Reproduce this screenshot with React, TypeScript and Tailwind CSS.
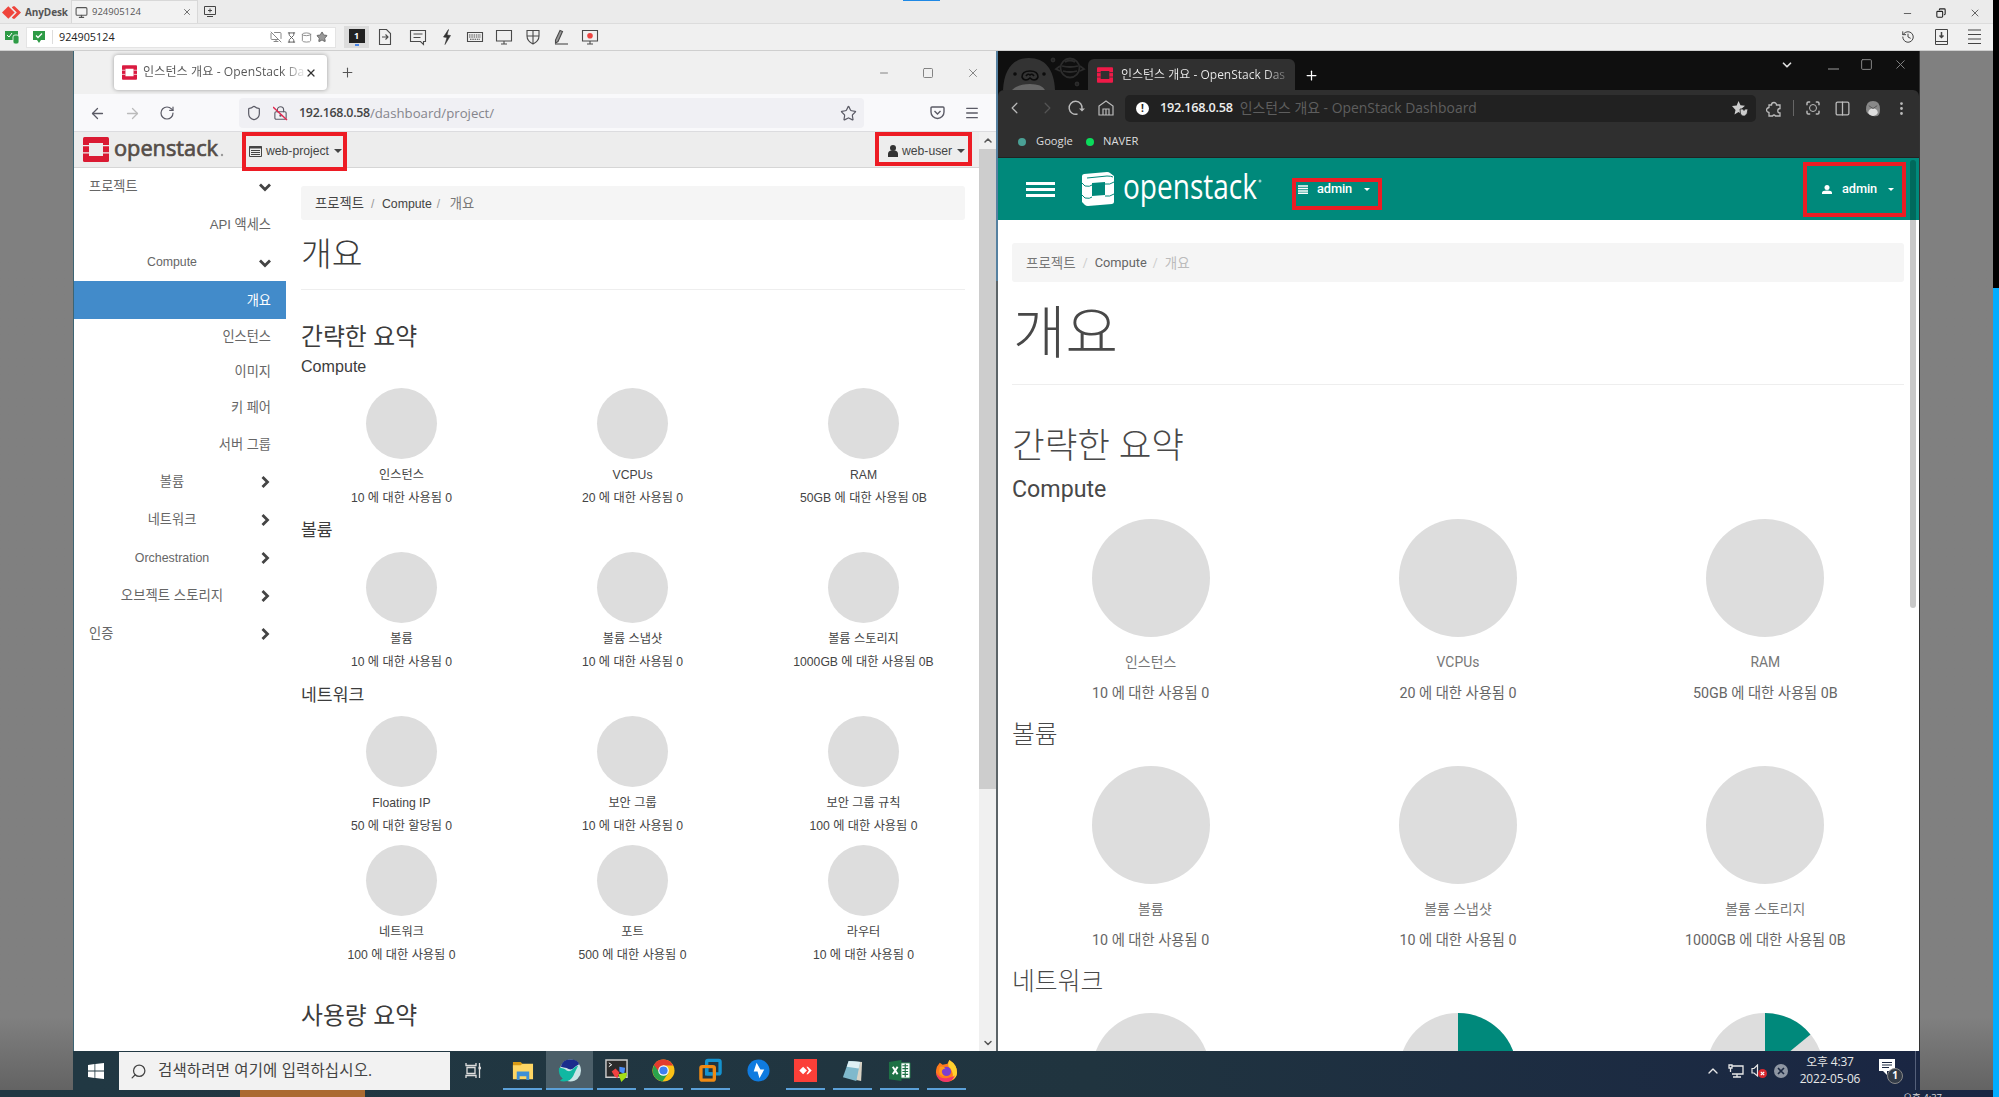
import React from "react";
import type { ReactNode } from "react";
import {
  ArrowLeft, ArrowRight, RotateCw, Shield, LockKeyhole, Star, Menu, Plus, X, Minus, Square, Copy, ChevronLeft, ChevronRight,
  ChevronDown, ChevronUp, Columns2, EllipsisVertical, History, MonitorOff, Hourglass, Cylinder,
  Monitor, Search, Scan,
} from "lucide-react";

const ARIAL = "font-['Liberation_Sans','Noto_Sans_CJK_KR',sans-serif]";
const ROBOTO = "font-['Roboto','Noto_Sans_CJK_KR',sans-serif]";
const UI = "font-['Open_Sans','Noto_Sans_CJK_KR',sans-serif]";

function Caret({ className }: { className: string }) {
  return (
    <svg className={className} viewBox="0 0 10 5">
      <path d="M0 0h10L5 5z" fill="currentColor" />
    </svg>
  );
}

function Chevron({ down }: { down?: boolean }) {
  return (
    <svg className="h-[12px] w-[12px] text-[#444]" viewBox="0 0 12 12" fill="none" stroke="currentColor" strokeWidth="2.8">
      {down ? <path d="M1 3.5l5 5 5-5" /> : <path d="M3.5 1l5 5-5 5" />}
    </svg>
  );
}

function OpenStackMark({ className, color, hole }: { className: string; color: string; hole: string }) {
  return (
    <svg className={className} viewBox="0 0 26 25">
      <rect width="26" height="25" rx="1.5" fill={color} />
      <rect x="6" y="6" width="14" height="13" fill={hole} />
      <path d="M0 8.6h6M20 8.6h6M0 15.8h6M20 15.8h6" stroke={hole} strokeWidth="1.2" />
    </svg>
  );
}

function AnyDeskMark({ className, fill }: { className: string; fill: string }) {
  return (
    <svg className={className} viewBox="0 0 18 12">
      <path d="M6 0l6 6-6 6-6-6z" fill={fill} />
      <path d="M10.5 0L12 0l6 6-6 6h-1.5l-1.2-1.2L14 6 9.300 1.200z" fill={fill} />
    </svg>
  );
}

/* ---------- Remote desktop client ---------- */

function ClientTitleBar() {
  return (
    <div className="relative flex h-[24px] items-end border-b border-[#dcdcdc] bg-[#ebebeb] text-[#555]">
      <div className="absolute left-[903px] top-0 h-[1px] w-[37px] bg-[#1e88e5]" />
      <div className="flex h-full w-[71px] items-center pl-[2px] pt-[1px]">
        <AnyDeskMark className="h-[13px] w-[19px]" fill="#ef443b" />
        <span className="ml-[4px] text-[10px] font-bold tracking-[-0.1px]">AnyDesk</span>
      </div>
      <div className="flex h-[23px] w-[127px] items-center border-x border-t border-[#d8d8d8] bg-[#f2f2f2] pl-[3px]">
        <Monitor className="h-[13px] w-[13px]" strokeWidth={2} />
        <span className="ml-[4px] text-[9.500px]">924905124</span>
        <X className="ml-[41px] h-[10px] w-[10px]" strokeWidth={2} />
      </div>
      <svg className="mb-[6px] ml-[6px] h-[11px] w-[12px]" viewBox="0 0 12 11" fill="none" stroke="#444">
        <path d="M.5.5h11v8H.5zM3 10.500h6M6 2.500v4M4 4.500h4" />
      </svg>
      <div className="ml-auto mb-[4px] flex items-center gap-[23px] pr-[12px]">
        <Minus className="h-[11px] w-[11px]" />
        <Copy className="h-[10px] w-[10px] -scale-x-100 text-[#222]" strokeWidth={2.600} />
        <X className="h-[12px] w-[12px]" strokeWidth={1.800} />
      </div>
    </div>
  );
}

function ToolCell({ children }: { children: ReactNode }) {
  return (
    <div className="flex w-[28.700px] justify-center">
      <svg className="h-[16px] w-[16px] overflow-visible" viewBox="0 0 16 16" fill="none" stroke="#4a4a4a" strokeWidth="1.100">
        {children}
      </svg>
    </div>
  );
}

function ClientToolBar() {
  return (
    <div className="flex h-[27px] items-center border-b border-[#cfcfcf] bg-[#f0f0f0] text-[#444]">
      <svg className="ml-[5px] h-[13px] w-[15px]" viewBox="0 0 15 13">
        <path d="M0 0h13v9H0z" fill="#2e9b46" />
        <path d="M2 4l2 2 3-4" stroke="#fff" fill="none" />
        <rect x="8" y="4" width="6" height="9" rx="2" fill="#2e9b46" stroke="#fff" strokeWidth=".8" />
      </svg>
      <div className="ml-[6px] flex h-[21px] w-[310px] items-center border border-[#e4e4e4] bg-white">
        <svg className="ml-[6px] h-[12px] w-[12px]" viewBox="0 0 12 12">
          <path d="M0 0h12v9H8l-2 3-2-3H0z" fill="#2e9b46" />
          <path d="M3 4.500l2 2 4-4" stroke="#fff" strokeWidth="1.300" fill="none" />
        </svg>
        <div className="ml-[7px] h-[14px] w-[1px] bg-[#ddd]" />
        <span className="ml-[6px] w-[211px] text-[10.800px] text-[#222]">924905124</span>
        <div className="flex items-center gap-[4px] text-[#888]">
          <MonitorOff className="h-[12px] w-[12px]" />
          <Hourglass className="h-[11px] w-[11px] text-[#555]" />
          <Cylinder className="h-[11px] w-[11px]" />
          <Star className="h-[12px] w-[12px] fill-[#999] text-[#666]" />
        </div>
      </div>
      <div className="ml-[8px] flex h-[22px] w-[25px] flex-col items-center justify-center bg-[#dcdcdc]">
        <div className="flex h-[14px] w-[16px] items-center justify-center bg-[#222] text-[9px] font-bold text-white">1</div>
        <div className="mt-[1px] h-[2px] w-[4px] bg-[#4a86e8]" />
      </div>
      <div className="ml-[2px] flex items-center">
        <ToolCell>
          <path d="M2.500.5h7l4 4v11h-11zM5 8h6M8.500 5.500L11 8l-2.500 2.500" />
        </ToolCell>
        <div className="w-[4px]" />
        <ToolCell>
          <path d="M.5 1.500h15v11h-2v3l-3-3H.5zM3.500 5h9M3.500 8.500h7" />
        </ToolCell>
        <ToolCell>
          <path d="M9.500.5L4.500 8l3.500.5L6 15.500 11.500 6.500 8 6z" fill="#333" stroke="#333" strokeWidth=".6" />
        </ToolCell>
        <ToolCell>
          <path d="M.5 3.500h15v9H.5z" />
          <path d="M2 6h12M2 8h12M3 10.200h10" strokeDasharray="1.500 .8" />
        </ToolCell>
        <ToolCell>
          <path d="M.5 1.500h15v10.500H.5zM8 12v3M5 15h6" />
        </ToolCell>
        <ToolCell>
          <path d="M2 1.500h12v5.500c0 4-3 6.500-6 8-3-1.500-6-4-6-8zM8 1.500V15M2 7h12" />
        </ToolCell>
        <ToolCell>
          <path d="M7 1.500l2.500 1L5 12.500l-2.500 1.500L2.500 11z" fill="#999" />
          <path d="M2 15h13" />
        </ToolCell>
        <ToolCell>
          <path d="M.5 1.500h15v10.500H.5zM8 12v3M5 15h6" />
          <circle cx="8" cy="6.800" r="2.800" fill="#ec4440" stroke="none" />
        </ToolCell>
      </div>
      <div className="ml-auto flex items-center gap-[20px] pr-[12px]">
        <History className="h-[14px] w-[14px]" strokeWidth={1.700} />
        <svg className="h-[16px] w-[13px]" viewBox="0 0 13 16" fill="none" stroke="#444">
          <path d="M.5.5h12v15H.5zM.5 12.500h12" />
          <path d="M6.500 3v5M4.500 6.500l2 2 2-2" strokeWidth="1.500" />
        </svg>
        <svg className="h-[16px] w-[13px]" viewBox="0 0 13 16" stroke="#444">
          <path d="M0 1h13M0 5.500h13M0 10h13M0 14.500h13" />
        </svg>
      </div>
    </div>
  );
}

/* ---------- Firefox window ---------- */

function FirefoxChrome() {
  return (
    <>
      <div className={`flex h-[43px] items-center bg-[#f0f0f0] text-[#555] ${UI}`}>
        <div className="ml-[40px] flex h-[35px] w-[213px] items-center rounded-[4px] bg-white pl-[8px] shadow-[0_0_4px_rgba(0,0,0,0.35)]">
          <OpenStackMark className="h-[15px] w-[15px] shrink-0" color="#da1a40" hole="#fff" />
          <div className="ml-[6px] w-[162px] whitespace-nowrap bg-linear-to-r from-[#555] from-85% to-[#eee] bg-clip-text text-[12.100px] tracking-[0.080px] text-transparent">
            인스턴스 개요 - OpenStack Da
          </div>
          <X className="ml-[0px] h-[12px] w-[12px] shrink-0 text-[#333]" strokeWidth={2.400} />
        </div>
        <Plus className="ml-[13px] h-[15px] w-[15px]" strokeWidth={1.700} />
        <div className="ml-auto flex items-center gap-[32px] pr-[16px] text-[#777]">
          <Minus className="h-[12px] w-[12px]" strokeWidth={1.800} />
          <Square className="h-[12px] w-[12px]" strokeWidth={1.800} />
          <X className="h-[14px] w-[14px]" strokeWidth={1.500} />
        </div>
      </div>
      <div className={`flex h-[38px] items-center border-b border-[#dcdcdf] bg-[#f9f9fb] pt-[1px] text-[#5b5b66] ${UI}`}>
        <ArrowLeft className="ml-[15px] h-[17px] w-[17px]" strokeWidth={1.800} />
        <ArrowRight className="ml-[18px] h-[17px] w-[17px] text-[#bbb]" strokeWidth={1.800} />
        <RotateCw className="ml-[18px] h-[16px] w-[16px]" strokeWidth={1.800} />
        <div className="ml-[64px] flex h-[30px] w-[625px] items-center rounded-[4px] bg-[#f0f0f4] pl-[7px]">
          <Shield className="h-[16px] w-[16px]" strokeWidth={1.800} />
          <div className="relative ml-[11px] h-[16px] w-[15px]">
            <LockKeyhole className="h-[16px] w-[15px]" strokeWidth={1.800} />
            <svg className="absolute inset-0 h-full w-full" viewBox="0 0 15 16" stroke="#e22850" strokeWidth="1.500">
              <path d="M0 2l14 13" />
            </svg>
          </div>
          <span className="ml-[11px] pt-[1px] text-[12.400px] font-semibold tracking-[-0.250px] text-[#444]">192.168.0.58</span>
          <span className="pt-[1px] text-[13.200px] text-[#85858c]">/dashboard/project/</span>
          <Star className="ml-auto mr-[7px] h-[17px] w-[17px]" strokeWidth={1.700} />
        </div>
        <svg className="ml-auto mr-[19px] h-[14px] w-[15px]" viewBox="0 0 15 14" fill="none" stroke="#5b5b66" strokeWidth="1.400">
          <path d="M2 1h11q1 0 1 1v4a6.500 6.500 0 0 1-13 0V2q0-1 1-1zM4.500 5l3 3 3-3" />
        </svg>
        <Menu className="mr-[16px] h-[16px] w-[16px]" strokeWidth={1.900} />
      </div>
    </>
  );
}

type NavItem = { label: string; height: string; kind: "top" | "group" | "leaf"; open?: boolean; active?: boolean; size?: string };

const NAV: NavItem[] = [
  { label: "프로젝트", height: "h-[37px]", kind: "top", open: true },
  { label: "API 액세스", height: "h-[38px]", kind: "leaf" },
  { label: "Compute", height: "h-[38px]", kind: "group", open: true, size: "text-[12.300px]" },
  { label: "개요", height: "h-[38px]", kind: "leaf", active: true },
  { label: "인스턴스", height: "h-[35px]", kind: "leaf" },
  { label: "이미지", height: "h-[35px]", kind: "leaf" },
  { label: "키 페어", height: "h-[37px]", kind: "leaf" },
  { label: "서버 그룹", height: "h-[36px]", kind: "leaf" },
  { label: "볼륨", height: "h-[38px]", kind: "group" },
  { label: "네트워크", height: "h-[38px]", kind: "group" },
  { label: "Orchestration", height: "h-[39px]", kind: "group", size: "text-[12.400px]" },
  { label: "오브젝트 스토리지", height: "h-[37px]", kind: "group", size: "text-[13.400px]" },
  { label: "인증", height: "h-[38px]", kind: "top" },
];

function SideNav() {
  return (
    <nav className="w-[212px] shrink-0">
      {NAV.map((n) => (
        <div
          key={n.label}
          className={`flex items-center pt-[1px] ${n.height} ${n.size ?? "text-[13.200px]"} ${n.active ? "bg-[#428bca] text-white" : "text-[#666]"} ${
            n.kind === "leaf" ? "justify-end pr-[15px]" : "justify-between pr-[15px]"
          } ${n.kind === "top" ? "pl-[15px]" : ""}`}
        >
          {n.kind === "group" ? <span className="ml-[28px] w-[140px] text-center">{n.label}</span> : <span>{n.label}</span>}
          {n.kind !== "leaf" && <Chevron down={n.open} />}
        </div>
      ))}
    </nav>
  );
}

type Quota = { name: string; usage: string; share?: number };

function FoxQuotas({ items }: { items: Quota[] }) {
  return (
    <div className="grid grid-cols-3 text-center text-[12.200px] text-[#444]">
      {items.map((q) => (
        <div key={q.name} className="flex flex-col items-center whitespace-nowrap">
          <div className="h-[71px] w-[71px] rounded-full bg-[#ddd]" />
          <div className="h-[29px] leading-[32px]">{q.name}</div>
          <div className="h-[20px] leading-[21px]">{q.usage}</div>
        </div>
      ))}
    </div>
  );
}

const COMPUTE: Quota[] = [
  { name: "인스턴스", usage: "10 에 대한 사용됨 0" },
  { name: "VCPUs", usage: "20 에 대한 사용됨 0" },
  { name: "RAM", usage: "50GB 에 대한 사용됨 0B" },
];
const VOLUME: Quota[] = [
  { name: "볼륨", usage: "10 에 대한 사용됨 0" },
  { name: "볼륨 스냅샷", usage: "10 에 대한 사용됨 0" },
  { name: "볼륨 스토리지", usage: "1000GB 에 대한 사용됨 0B" },
];
const NETWORK: Quota[] = [
  { name: "Floating IP", usage: "50 에 대한 할당됨 0" },
  { name: "보안 그룹", usage: "10 에 대한 사용됨 0" },
  { name: "보안 그룹 규칙", usage: "100 에 대한 사용됨 0" },
];
const NETWORK_MORE: Quota[] = [
  { name: "네트워크", usage: "100 에 대한 사용됨 0" },
  { name: "포트", usage: "500 에 대한 사용됨 0" },
  { name: "라우터", usage: "10 에 대한 사용됨 0" },
];

function FirefoxPage() {
  return (
    <div className={`flex h-[919px] overflow-hidden bg-white ${ARIAL}`}>
      <div className="h-[919px] w-[905px] shrink-0 overflow-hidden">
        <header className="flex h-[36px] items-center border-b border-[#d6d6d6] bg-[#ededed] text-[12.200px] text-[#444]">
          <OpenStackMark className="ml-[9px] h-[25px] w-[26px]" color="#da1a32" hole="#ededed" />
          <svg className="ml-[5px] h-[34px] w-[111px] overflow-visible" viewBox="0 0 111 34">
            <text x="0" y="23" textLength="104" lengthAdjust="spacingAndGlyphs" fill="#554d48" stroke="#554d48" strokeWidth="0.700" className="font-['Open_Sans',sans-serif] text-[22.500px]">
              openstack
            </text>
            <circle cx="108" cy="22" r="1.200" fill="#999" />
          </svg>
          <div className="relative ml-[17px] flex h-full w-[105px] items-center pt-[3px]">
            <svg className="ml-[7px] h-[11px] w-[13px]" viewBox="0 0 13 11">
              <path d="M.5.5h12v10H.5z" fill="none" stroke="#444" />
              <path d="M0 1.500h13" stroke="#444" strokeWidth="2" />
              <path d="M2 4.500h9M2 6.500h9M2 8.500h9" stroke="#444" />
            </svg>
            <span className="ml-[4px]">web-project</span>
            <Caret className="ml-[5px] h-[4px] w-[8px]" />
            <div className="absolute left-[0px] top-0 h-[39px] w-[105px] border-[4px] border-[#ed1c24]" />
          </div>
          <div className="relative ml-auto mr-[7px] flex h-full w-[97px] items-center pt-[3px]">
            <svg className="ml-[13px] h-[12px] w-[10px]" viewBox="0 0 10 12" fill="#333">
              <circle cx="5" cy="3" r="3" />
              <path d="M0 12V9q0-3 3-3.500h4Q10 6 10 9v3z" />
            </svg>
            <span className="ml-[4px]">web-user</span>
            <Caret className="ml-[5px] h-[4px] w-[8px]" />
            <div className="absolute left-0 top-0 h-[34px] w-[97px] border-[4px] border-[#ed1c24]" />
          </div>
        </header>
        <div className="flex">
          <SideNav />
          <main className="w-[693px] text-[#3c3c3c]">
            <div className="mx-[15px] mt-[18px] flex h-[34px] w-[664px] items-center rounded-[3px] bg-[#f5f5f5] pl-[14px] pt-[2px] text-[13.300px] text-[#444]">
              <span>프로젝트</span>
              <span className="ml-[7px] w-[11px] text-[12px] text-[#999]">/</span>
              <span className="text-[12.300px]">Compute</span>
              <span className="ml-[5px] w-[13px] text-[12px] text-[#999]">/</span>
              <span className="text-[#777]">개요</span>
            </div>
            <h1 className="ml-[15px] flex h-[70px] w-[664px] items-center border-b border-[#eee] pt-[1px] text-[33.500px] font-light">개요</h1>
            <h2 className="ml-[15px] mt-[24px] h-[44px] text-[23.800px] leading-[46px]">간략한 요약</h2>
            <h3 className="mb-[14px] ml-[15px] h-[16px] text-[16.100px] leading-[16px]">Compute</h3>
            <FoxQuotas items={COMPUTE} />
            <h3 className="ml-[15px] h-[44px] text-[17.200px] leading-[45px]">볼륨</h3>
            <FoxQuotas items={VOLUME} />
            <h3 className="ml-[15px] h-[44px] text-[17.200px] leading-[46px]">네트워크</h3>
            <FoxQuotas items={NETWORK} />
            <div className="h-[9px]" />
            <FoxQuotas items={NETWORK_MORE} />
            <h2 className="ml-[15px] h-[80px] text-[23.800px] leading-[101px]">사용량 요약</h2>
          </main>
        </div>
      </div>
      <div className="flex w-[17px] flex-col items-center bg-[#f0f0f0] text-[#555]">
        <ChevronUp className="h-[17px] w-[12px] shrink-0" strokeWidth={3} />
        <div className="h-[640px] w-full bg-[#cdcdcd]" />
        <ChevronDown className="mt-auto h-[16px] w-[12px] shrink-0" strokeWidth={3} />
      </div>
    </div>
  );
}

/* ---------- Whale window ---------- */

function WhaleMascot() {
  return (
    <svg className="h-[39px] w-[90px] shrink-0" viewBox="0 0 90 39">
      <path d="M5 39C6 18 15 7 31 7s25 11 26 32z" fill="#333" />
      <path d="M14 39q6-6 18-6t15 6z" fill="#666" />
      <circle cx="17" cy="23" r="1.800" fill="#0c0c0c" />
      <circle cx="46" cy="23" r="1.800" fill="#0c0c0c" />
      <path d="M24 26q0-6 8-6t8 6q-1 3-4 3-2 0-4-2-2 2-4 2-3 0-4-3zM28 25q2-3 4-1 2-2 4 1" fill="none" stroke="#0c0c0c" strokeWidth="1.600" />
      <g fill="none" stroke="#2c2c2c" strokeWidth="1.800">
        <circle cx="72" cy="17" r="9.500" />
        <path d="M64 15q8 2 16 0M65 20q7 2 14 0M62 15l-4 3 4 2M82 15l4 3-4 2M67 11q5-3 10 0" />
        <circle cx="55" cy="9" r="1.500" />
        <circle cx="79" cy="33" r="1.500" />
      </g>
    </svg>
  );
}

function WhaleChrome() {
  return (
    <div className={`bg-[#0f0f0f] text-[#bbb] ${UI}`}>
      <div className="flex h-[39px] items-end">
        <WhaleMascot />
        <div className="flex h-[31px] w-[207px] items-center rounded-t-[6px] bg-[#303030] pl-[9px]">
          <OpenStackMark className="h-[16px] w-[16px] shrink-0" color="#f01a48" hole="#303030" />
          <div className="ml-[8px] w-[168px] whitespace-nowrap bg-linear-to-r from-[#eee] from-85% to-[#555] bg-clip-text text-[12px] text-transparent">
            인스턴스 개요 - OpenStack Das
          </div>
        </div>
        <Plus className="mb-[7px] ml-[9px] h-[15px] w-[15px] text-white" />
        <div className="mb-[18px] ml-auto flex items-center pr-[11px] text-[#888]">
          <ChevronDown className="h-[14px] w-[14px] text-[#ddd]" strokeWidth={3} />
          <div className="ml-[34px] mt-[9px] h-[2px] w-[11px] bg-[#555]" />
          <Square className="ml-[21px] h-[13px] w-[13px]" strokeWidth={1.800} />
          <X className="ml-[20px] h-[15px] w-[15px]" strokeWidth={1.500} />
        </div>
      </div>
      <div className="h-[68px] rounded-t-[6px] border-b border-[#222] bg-[#2f2f2f]">
        <div className="flex h-[36px] items-center">
          <ChevronLeft className="ml-[7px] h-[20px] w-[19px]" strokeWidth={1.500} />
          <ChevronRight className="ml-[14px] h-[20px] w-[19px] text-[#555]" strokeWidth={1.500} />
          <svg className="ml-[11px] h-[16px] w-[17px]" viewBox="0 0 17 16" fill="none" stroke="#bbb" strokeWidth="1.400">
            <path d="M9.500 14A6.500 6.500 0 1 1 14 9" />
            <path d="M11 8.500l3 3 3-3z" fill="#bbb" stroke="none" />
          </svg>
          <svg className="ml-[13px] h-[16px] w-[16px]" viewBox="0 0 16 16" fill="none" stroke="#bbb" strokeWidth="1.200">
            <path d="M1 15V6l7-5 7 5v9zM5 15V9h6v6M8 9v6" />
          </svg>
          <div className="ml-[11px] flex h-[27px] w-[631px] items-center rounded-[5px] bg-[#212121] pl-[11px]">
            <div className="flex h-[13px] w-[13px] items-center justify-center rounded-full bg-white text-[10px] font-bold text-[#222]">!</div>
            <span className="ml-[11px] text-[12.700px] font-semibold tracking-[-0.250px] text-[#eee]">192.168.0.58</span>
            <span className="ml-[7px] text-[13.900px] text-[#5e5e5e]">인스턴스 개요 - OpenStack Dashboard</span>
            <svg className="ml-auto mr-[8px] h-[15px] w-[16px]" viewBox="0 0 16 15" fill="#ccc">
              <path d="M6.500 0l2 4.200 4.500.5-3.500 3V13L6.500 11 2.500 13.500l1-4.500L0 5l4.700-.5z" />
              <path d="M8 8h3l1 1.500L13 8h3l-1 5-2.500 2h-2L8.500 13z" stroke="#212121" strokeWidth=".8" />
            </svg>
          </div>
          <svg className="ml-[10px] h-[17px] w-[16px]" viewBox="0 0 16 17" fill="none" stroke="#bbb" strokeWidth="1.300">
            <path d="M3 5h2.500a2.500 2.500 0 1 1 5 0H14v3.500a2 2 0 0 0 0 4.500v3H9.500q-1.500-2-3 0H3v-3.500Q.5 12 .5 10T3 7.500z" />
          </svg>
          <div className="ml-[11px] h-[16px] w-[1px] bg-[#666]" />
          <div className="relative ml-[11px] h-[16px] w-[16px]">
            <Scan className="h-[16px] w-[16px]" strokeWidth={2.200} />
            <div className="absolute left-[4px] top-[4px] h-[8px] w-[8px] rounded-full border-[1.500px] border-[#bbb]" />
          </div>
          <Columns2 className="ml-[13px] h-[17px] w-[17px]" strokeWidth={1.800} />
          <svg className="ml-[15px] h-[17px] w-[14px]" viewBox="0 0 15 16">
            <path d="M0 9q0-9 7.500-9T15 9t-7.500 7T0 9z" fill="#888" />
            <ellipse cx="7.500" cy="12" rx="5" ry="4" fill="#ddd" />
            <path d="M3 5l4.500 3L12 5" fill="none" stroke="#555" />
          </svg>
          <EllipsisVertical className="ml-[13px] h-[17px] w-[17px]" />
        </div>
        <div className="flex h-[31px] items-center text-[11.200px] text-[#ddd]">
          <div className="ml-[20px] h-[8px] w-[8px] rounded-full bg-[#4aa095]" />
          <span className="ml-[10px] w-[54px]">Google</span>
          <div className="-ml-[4px] h-[8px] w-[8px] rounded-full bg-[#0bdc5c]" />
          <span className="ml-[9px]">NAVER</span>
        </div>
      </div>
    </div>
  );
}

function WhaleHeader() {
  return (
    <header className="flex h-[62px] items-center bg-[#00897b] text-[12.800px] text-white">
      <div className="ml-[28px] flex w-[29px] flex-col gap-[3px]">
        <div className="h-[3px] bg-white" />
        <div className="h-[3px] bg-white" />
        <div className="h-[3px] bg-white" />
      </div>
      <svg className="ml-[27px] h-[34px] w-[32px]" viewBox="0 0 32 34">
        <path d="M0 4q0-1.500 2-2L25 0q2 0 3 1l4 3v26q0 1.500-2 2L6 34q-2 0-3-1l-3-3z" fill="#fff" />
        <path d="M10 11l13-1v13l-13 1z" fill="#00897b" />
        <path d="M0 11l3 3q5 1 7-1M23 12q5 1 9-2M0 23l3 3q5 1 7-1M23 24q5 1 9-2M5 6l20-2q4 0 6 1" fill="none" stroke="#00897b" strokeWidth="1" />
      </svg>
      <svg className="ml-[10px] h-[44px] w-[140px] overflow-visible" viewBox="0 0 140 44">
        <text x="-1" y="31.500" textLength="134" lengthAdjust="spacingAndGlyphs" fill="#fff" className="font-['Open_Sans',sans-serif] text-[35px]">
          openstack
        </text>
        <circle cx="136" cy="14" r="1.500" fill="#9fd3cc" />
      </svg>
      <div className="relative ml-[28px] flex h-[32px] w-[90px] items-center">
        <svg className="ml-[6px] h-[9px] w-[10px]" viewBox="0 0 10 9">
          <path d="M0 1h10M0 3.500h10M0 6h10M0 8.300h10" stroke="#fff" strokeWidth="1.600" />
        </svg>
        <span className="ml-[9px] font-medium tracking-[-0.100px]">admin</span>
        <Caret className="ml-[12px] h-[3px] w-[6px]" />
        <div className="absolute left-0 top-[5px] h-[32px] w-[90px] border-[4px] border-[#ed1c24]" />
      </div>
      <div className="relative ml-auto mr-[4px] flex h-[55px] w-[103px] items-center">
        <svg className="ml-[19px] h-[9px] w-[10px]" viewBox="0 0 10 9" fill="#fff">
          <circle cx="5" cy="2.500" r="2.500" />
          <path d="M0 9V7.500Q0 5.500 5 5.500t5 2V9z" />
        </svg>
        <span className="ml-[10px] font-medium tracking-[-0.100px]">admin</span>
        <Caret className="ml-[11px] h-[3px] w-[6px]" />
        <div className="absolute left-0 top-0 h-[55px] w-[103px] border-[4px] border-[#ed1c24]" />
      </div>
      <div className="mr-[3px] h-[60px] w-[6px] self-end rounded-t-[3px] bg-[#00695c]" />
    </header>
  );
}

function Pie({ share = 0 }: { share?: number }) {
  const a = share * 2 * Math.PI;
  const x = 59 + 59 * Math.sin(a);
  const y = 59 - 59 * Math.cos(a);
  return (
    <svg className="h-[118px] w-[118px] shrink-0" viewBox="0 0 118 118">
      <circle cx="59" cy="59" r="59" fill="#ddd" />
      {share > 0 && <path d={`M59 59V0A59 59 0 ${share > 0.5 ? 1 : 0} 1 ${x} ${y}z`} fill="#00897b" />}
    </svg>
  );
}

function WhaleQuotas({ items, labels = true }: { items: Quota[]; labels?: boolean }) {
  return (
    <div className="-ml-[15px] grid w-[922px] grid-cols-3 text-center text-[14.300px] text-[#666]">
      {items.map((q) => (
        <div key={q.name} className="flex flex-col items-center whitespace-nowrap">
          <Pie share={q.share} />
          {labels && (
            <>
              <div className="mt-[10px] h-[30px] text-[13.900px] leading-[30px] text-[#777]">{q.name}</div>
              <div className="h-[32px] leading-[32px]">{q.usage}</div>
            </>
          )}
        </div>
      ))}
    </div>
  );
}

const WHALE_NETWORK: Quota[] = [
  { name: "floating", usage: "" },
  { name: "groups", usage: "", share: 0.5 },
  { name: "rules", usage: "", share: 0.14 },
];

function WhalePage() {
  return (
    <div className={`h-[893px] overflow-hidden bg-white ${ROBOTO}`}>
      <WhaleHeader />
      <div className="flex h-[831px] overflow-hidden">
        <main className="w-[898px] shrink-0 pl-[14px] text-[#484848]">
          <div className="mt-[23px] flex h-[39px] w-[892px] items-center rounded-[3px] bg-[#f5f5f5] pl-[14px] pt-[1px] text-[13.500px] text-[#777]">
            <span>프로젝트</span>
            <span className="ml-[7px] w-[12px] text-[12px] text-[#ccc]">/</span>
            <span className="text-[12.800px] text-[#666]">Compute</span>
            <span className="ml-[6px] w-[12px] text-[12px] text-[#ccc]">/</span>
            <span className="text-[#bbb]">개요</span>
          </div>
          <h1 className="flex h-[103px] w-[892px] items-center border-b border-[#eee] pl-[1px] pt-[1px] text-[57px] font-light">개요</h1>
          <h2 className="mt-[36px] h-[50px] text-[35.500px] font-light leading-[51px]">간략한 요약</h2>
          <h3 className="mb-[11px] h-[37px] text-[23.200px] leading-[36px]">Compute</h3>
          <WhaleQuotas items={COMPUTE} />
          <h3 className="mb-[5px] h-[52px] text-[24.800px] font-light leading-[52px]">볼륨</h3>
          <WhaleQuotas items={VOLUME} />
          <h3 className="mb-[5px] h-[52px] text-[24.800px] font-light leading-[52px]">네트워크</h3>
          <WhaleQuotas items={WHALE_NETWORK} labels={false} />
        </main>
        <div className="ml-[14px] h-[388px] w-[6px] rounded-b-[3px] bg-[#c8c8c8]" />
      </div>
    </div>
  );
}

/* ---------- Task bar ---------- */

const APPS: { name: string; art: ReactNode; running: boolean; active?: boolean }[] = [
  {
    name: "explorer", running: true,
    art: (
      <>
        <path d="M2 3h8l2 2v5H2z" fill="#d99a14" />
        <path d="M2 6.500L10 6.500 12 5h11v16H2z" fill="#ffd664" />
        <path d="M6 22v-9h13v9h-3v-4H9v4z" fill="#3f8fd6" />
      </>
    ),
  },
  {
    name: "whale", running: true, active: true,
    art: (
      <>
        <ellipse cx="13" cy="12" rx="11" ry="11.500" fill="#c9e4e6" />
        <path d="M3 8Q5 0 13 .5q8 0 9 5-4 2-7 5-3 1-6-1Q6 9 3 8z" fill="#1b2c8c" />
        <path d="M1 9q5 0 8 3 4 2 7-2 3-3 5-3-2 4-4 8-2 6-7 8-4 1-8 0l3-3Q0 17 1 9z" fill="#10b8a2" />
      </>
    ),
  },
  {
    name: "terminal", running: true,
    art: (
      <>
        <path d="M1 1h22v18H1z" fill="#2b2b2b" stroke="#ccc" strokeWidth="1.500" />
        <path d="M4 4l3 2-3 2" stroke="#fff" fill="none" />
        <path d="M7 13l4-3 4 4-2 6-3-2z" fill="#f04141" />
        <path d="M15 8l6 1-1 7-5-3z" fill="#4b8df8" />
        <path d="M14 16l9-2-1 5-5 5z" fill="#a4e016" />
      </>
    ),
  },
  {
    name: "chrome", running: true,
    art: (
      <>
        <circle cx="12" cy="12" r="11.500" fill="#fbc116" />
        <path d="M12 12L2.500 6A11.500 11.500 0 0 0 11 23.500l6-9z" fill="#2ba24c" />
        <path d="M2 6A11.500 11.500 0 0 1 22 6.800H12L7 13z" fill="#e33b2e" />
        <circle cx="12" cy="12" r="5.500" fill="#fff" />
        <circle cx="12" cy="12" r="4.300" fill="#3e7ff0" />
      </>
    ),
  },
  {
    name: "vmware", running: true,
    art: (
      <g fill="none" strokeWidth="3.500">
        <rect x="8" y="1.500" width="14" height="14" rx="1.500" stroke="#1593cf" />
        <rect x="2" y="8" width="14" height="14" rx="1.500" stroke="#f08a13" />
        <path d="M8 9.500v6h6" stroke="#1593cf" />
      </g>
    ),
  },
  {
    name: "bandizip", running: false,
    art: (
      <>
        <circle cx="12" cy="12" r="11.500" fill="#0f7be0" />
        <path d="M10 4L7 13h4l2 7 5-9h-4z" fill="#fff" />
      </>
    ),
  },
  {
    name: "anydesk", running: true,
    art: (
      <>
        <path d="M0 0h24v24H0z" fill="#fb3f38" />
        <path d="M9.500 8l4 4-4 4-4-4zM13 8h1.500l4 4-4 4H13l2.500-4z" fill="#fff" />
      </>
    ),
  },
  {
    name: "notepad", running: true,
    art: (
      <>
        <path d="M10 2l12 1-1 20-5-1z" fill="#d8d2c4" />
        <path d="M8 2l12 1-4 20L2 19z" fill="#7fb9cc" />
        <path d="M8 2l12 1-1.500 7L6 8z" fill="#dff0f4" />
      </>
    ),
  },
  {
    name: "excel", running: true,
    art: (
      <>
        <path d="M12 4h11v16H12z" fill="#fff" stroke="#1e7145" />
        <path d="M15 7h6M15 10h6M15 13h6M15 16h6M18 5v14" stroke="#1e7145" strokeWidth="1.200" />
        <path d="M1 3l13-2v22L1 21z" fill="#1e7145" />
        <path d="M5 8l5 8M10 8l-5 8" stroke="#fff" strokeWidth="2" />
      </>
    ),
  },
  {
    name: "firefox", running: true,
    art: (
      <>
        <path d="M2 8l3-4 3 2 5-1 2-4q8 5 8 13a11 10 0 0 1-22 0q0-3 1-6z" fill="#ff7a1c" />
        <path d="M15 1q8 5 8 13 0 5-5 8 2-7-2-12-4-3-1-9z" fill="#ffd12e" />
        <path d="M1 14q4 7 11 6t9-3q-3 7-9 7-9 0-11-10z" fill="#f0356b" />
        <circle cx="12" cy="13" r="4.800" fill="#7c3fd0" />
        <path d="M5 8q4-1 6 2-3 0-4 3 0 4 4 5-6 0-7-5z" fill="#ff9a1c" />
      </>
    ),
  },
];

function TaskBar() {
  return (
    <div className={`flex h-[39px] items-center bg-linear-to-r from-[#213843] via-[#20343f] via-55% to-[#1a2643] ${UI}`}>
      <svg className="ml-[15px] h-[16px] w-[16px]" viewBox="0 0 16 16" fill="#fff">
        <path d="M0 2l6.500-1v6.600H0zM7.300.9L16 0v7.600H7.300zM0 8.400h6.500V15L0 14zM7.300 8.400H16V16l-8.700-1z" />
      </svg>
      <div className="ml-[15px] flex h-[38px] w-[331px] items-center self-end bg-[#f2f2f2] pl-[11px] text-[#444]">
        <Search className="h-[17px] w-[17px] -scale-x-100" strokeWidth={1.800} />
        <span className="ml-[11px] text-[15.500px] tracking-[0.150px]">검색하려면 여기에 입력하십시오.</span>
      </div>
      <svg className="ml-[15px] h-[15px] w-[17px]" viewBox="0 0 17 15" fill="none" stroke="#ddd" strokeWidth="1.300">
        <path d="M1 0v2.500h10V0M1 15v-2.500h10V15M2 4.500h8v6H2zM14.500 0v15" />
        <path d="M13.500 5h2.500" strokeWidth="2.500" />
      </svg>
      <div className="ml-[17px] flex h-full">
        {APPS.map((a) => (
          <div key={a.name} className={`flex w-[47.100px] flex-col items-center ${a.active ? "bg-[#4c5f69]" : ""}`}>
            <svg className="mb-[6px] mt-[8px] h-[23px] w-[23px] overflow-visible" viewBox="0 0 24 24">{a.art}</svg>
            {a.running && <div className={`h-[2px] bg-[#5ba0d8] ${a.active ? "w-full" : "w-[39px]"}`} />}
          </div>
        ))}
      </div>
      <div className="ml-auto flex h-full items-center text-[#e8e8e8]">
        <ChevronUp className="h-[16px] w-[16px]" />
        <svg className="ml-[7px] h-[14px] w-[16px]" viewBox="0 0 16 14" fill="none" stroke="#e8e8e8" strokeWidth="1.300">
          <path d="M4 2h11v8H4M9 10v3M5 13h8M1 1h3v3H1zM2.500 4v4" />
        </svg>
        <svg className="ml-[7px] h-[14px] w-[16px]" viewBox="0 0 16 14">
          <path d="M1 4.500h2L6.500 1v11L3 9H1z" fill="none" stroke="#e8e8e8" strokeWidth="1.200" />
          <circle cx="11.500" cy="9.500" r="4.500" fill="#d9272e" />
          <path d="M9.800 7.800l3.400 3.400M13.200 7.800l-3.400 3.400" stroke="#fff" strokeWidth="1.200" />
        </svg>
        <svg className="ml-[7px] h-[14px] w-[14px]" viewBox="0 0 14 14">
          <circle cx="7" cy="7" r="7" fill="#8e96a3" />
          <path d="M4 4l6 6M10 4l-6 6" stroke="#1b2841" strokeWidth="1.600" />
        </svg>
        <div className="mb-[1px] ml-[9px] flex w-[66px] flex-col whitespace-nowrap text-center text-[11.900px] leading-[17.500px] tracking-[-0.150px]">
          <span>오후 4:37</span>
          <span>2022-05-06</span>
        </div>
        <div className="relative ml-[16px] h-[24px] w-[24px]">
          <svg className="h-[16px] w-[16px]" viewBox="0 0 16 16">
            <path d="M0 0h16v12H8v4l-4-4H0z" fill="#fff" />
            <path d="M3 3.500h10M3 6h10M3 8.500h7" stroke="#1b2841" />
          </svg>
          <div className="absolute left-[8px] top-[9px] flex h-[16px] w-[16px] items-center justify-center rounded-full border border-[#888] bg-[#333b47] text-[10px] font-bold text-white">1</div>
        </div>
        <div className="ml-[12px] mr-[4px] h-full w-[1px] bg-[#55607a]" />
      </div>
    </div>
  );
}

export default function App() {
  return (
    <div className={`flex h-[1097px] w-[1999px] overflow-hidden ${UI}`}>
      <div className="flex w-[1993px] shrink-0 flex-col">
        <ClientTitleBar />
        <ClientToolBar />
        <div className="flex h-[1039px]">
          <div className="w-[73px] shrink-0 bg-linear-to-b from-[#808080] from-93% to-[#636363]" />
          <div className="w-[1847px] shrink-0">
            <div className="flex h-[1000px]">
              <div className="w-[925px] shrink-0 border-l border-[#3d6473]">
                <div className="flex">
                  <div className="w-[922px]">
                    <FirefoxChrome />
                    <FirefoxPage />
                  </div>
                  <div className="h-[1000px] w-[2px] bg-linear-to-b from-[#5580a0] from-23% to-[#5c6468] to-23%" />
                </div>
              </div>
              <div className="w-[922px] border-r border-[#333]">
                <WhaleChrome />
                <WhalePage />
              </div>
            </div>
            <TaskBar />
          </div>
          <div className="w-[73px] shrink-0 bg-linear-to-b from-[#808080] from-93% to-[#636363]" />
        </div>
        <div className="flex h-[7px] overflow-hidden bg-linear-to-r from-[#213843] via-[#20343f] via-55% to-[#1a2643]">
          <div className="ml-[240px] h-full w-[125px] bg-[#ab6a31]" />
          <span className="ml-auto mr-[51px] mt-[2px] text-[9.500px] leading-[12px] text-[#ddd]">오후 4:37</span>
        </div>
      </div>
      <div className="flex w-[6px] flex-col">
        <div className="h-[288px] bg-black" />
        <div className="flex-1 bg-[#00adff]" />
      </div>
    </div>
  );
}
